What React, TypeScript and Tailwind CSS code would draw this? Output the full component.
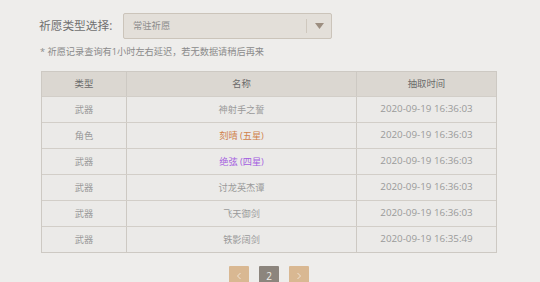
import React from "react";

const rows = [
  { type: "武器", name: "神射手之誓", color: "text-[#9a9a9a]", time: "2020-09-19 16:36:03" },
  { type: "角色", name: "刻晴 (五星)", color: "text-[#d0814a]", time: "2020-09-19 16:36:03" },
  { type: "武器", name: "绝弦 (四星)", color: "text-[#a45ee0]", time: "2020-09-19 16:36:03" },
  { type: "武器", name: "讨龙英杰谭", color: "text-[#9a9a9a]", time: "2020-09-19 16:36:03" },
  { type: "武器", name: "飞天御剑", color: "text-[#9a9a9a]", time: "2020-09-19 16:36:03" },
  { type: "武器", name: "铁影阔剑", color: "text-[#9a9a9a]", time: "2020-09-19 16:35:49" },
];

export default function App() {
  return (
    <div
      className="w-[540px] h-[282px] overflow-hidden bg-[#eeedeb] pl-[39px] pt-[13px]"
      style={{ fontFamily: '"Open Sans", "Noto Sans CJK SC", sans-serif' }}
    >
      <div className="flex items-center h-[26px]">
        <span className="w-[84px] text-[11.7px] text-[#707070] leading-none whitespace-nowrap">祈愿类型选择:</span>
        <div className="w-[209px] h-[26px] flex items-center bg-[#e3dfd9] border border-[#cbc4ba] rounded-[2px]">
          <span className="pl-[9px] flex-1 text-[9.3px] text-[#8c8c8c] leading-none">常驻祈愿</span>
          <div className="w-px h-[14px] bg-[#cfc8be]" />
          <div className="w-[24px] flex justify-center">
            <svg width="9" height="6" viewBox="0 0 9 6">
              <path d="M0 0 L9 0 L4.5 6 Z" fill="#9c8e80" />
            </svg>
          </div>
        </div>
      </div>
      <div className="mt-[6px] ml-px h-[14px] flex items-center text-[9.2px] text-[#8a8a8a] leading-none whitespace-nowrap">
        * 祈愿记录查询有1小时左右延迟，若无数据请稍后再来
      </div>
      <div className="mt-[12px] ml-[2px] w-[456px] border border-[#cdc9c3]">
        <div className="grid grid-cols-[85px_230px_139px] h-[24px] bg-[#dbd7d1] text-[9.4px] text-[#6a6a6a] items-center">
          <div className="h-full flex items-center justify-center border-r border-[#cdc9c3]">类型</div>
          <div className="h-full flex items-center justify-center border-r border-[#cdc9c3]">名称</div>
          <div className="h-full flex items-center justify-center">抽取时间</div>
        </div>
        {rows.map((r, i) => (
          <div
            key={i}
            className="grid grid-cols-[85px_230px_139px] h-[26px] border-t border-[#d2cec8] bg-[#ebeae8] text-[9.2px]"
          >
            <div className="h-full flex items-center justify-center border-r border-[#cdc9c3] text-[#9a9a9a]">{r.type}</div>
            <div className={`h-full flex items-center justify-center border-r border-[#cdc9c3] ${r.color}`}>{r.name}</div>
            <div className="h-full flex items-center justify-center text-[#9a9a9a] text-[9.8px]">{r.time}</div>
          </div>
        ))}
      </div>
      <div className="mt-[13px] ml-[2px] w-[456px] flex justify-center gap-[10px]">
        <div className="w-[20px] h-[20px] bg-[#d9b892] rounded-[1px] flex items-center justify-center">
          <svg width="6" height="8" viewBox="0 0 6 8">
            <path d="M4.5 1 L1.5 4 L4.5 7" stroke="#efe3d4" strokeWidth="1" fill="none" />
          </svg>
        </div>
        <div className="w-[20px] h-[20px] bg-[#8c857d] rounded-[1px] flex items-center justify-center text-[10px] text-[#f0ede8]">2</div>
        <div className="w-[20px] h-[20px] bg-[#d9b892] rounded-[1px] flex items-center justify-center">
          <svg width="6" height="8" viewBox="0 0 6 8">
            <path d="M1.5 1 L4.5 4 L1.5 7" stroke="#efe3d4" strokeWidth="1" fill="none" />
          </svg>
        </div>
      </div>
    </div>
  );
}
